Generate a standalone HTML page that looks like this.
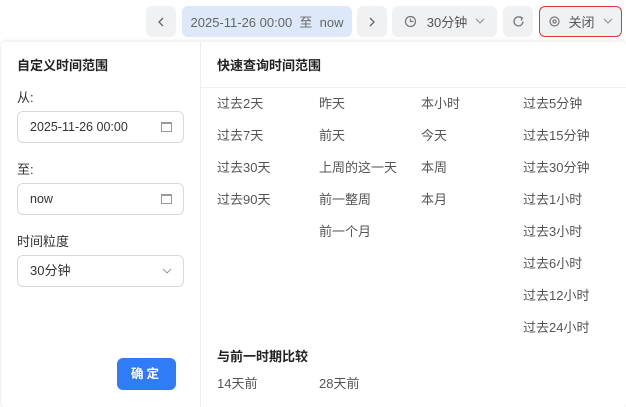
<!DOCTYPE html>
<html><head><meta charset="utf-8"><style>
*{box-sizing:border-box;margin:0;padding:0}
body{width:626px;height:407px;background:#fff;font-family:"Liberation Sans","Noto Sans CJK SC",sans-serif;position:relative;overflow:hidden;color:#333}
.b{position:absolute;top:6px;height:31px;border-radius:6px;background:#f0f1f3;display:flex;align-items:center;justify-content:center;font-size:13px;color:#555}
.panel{position:absolute;left:1px;top:42px;width:625px;height:365px;background:#fff;box-shadow:0 0 6px rgba(0,0,0,.12);border-radius:4px}
.a{position:absolute;font-size:13px;color:#555;white-space:nowrap}
.h{position:absolute;font-size:13px;font-weight:bold;color:#222}
.inp{position:absolute;left:16px;width:167px;height:32px;border:1px solid #d9d9d9;border-radius:6px;font-size:12.5px;color:#333;padding-left:12px;line-height:30px}
.cal{position:absolute;right:11px;top:10px;width:11px;height:10px;border:1px solid #999;border-top-width:2px}
svg{display:block}
</style></head><body>
<div class="b" style="left:146px;width:30px"><svg width="8" height="10"><path d="M6 1L2 5L6 9" fill="none" stroke="#666" stroke-width="1.3"/></svg></div>
<div class="b" style="left:182px;width:170px;background:#dde9f8;color:#666">2025-11-26 00:00&nbsp; 至&nbsp; now</div>
<div class="b" style="left:357px;width:30px"><svg width="8" height="10"><path d="M2 1L6 5L2 9" fill="none" stroke="#666" stroke-width="1.3"/></svg></div>
<div class="b" style="left:392px;width:105px"><svg width="13" height="13" style="margin-right:10px"><circle cx="6.5" cy="6.5" r="5" fill="none" stroke="#777" stroke-width="1.2"/><path d="M6.5 3.5V6.5H9.5" fill="none" stroke="#777" stroke-width="1.2"/></svg>30分钟<svg width="10" height="7" style="margin-left:8px"><path d="M1 1L5 5L9 1" fill="none" stroke="#888" stroke-width="1"/></svg></div>
<div class="b" style="left:503px;width:30px"><svg width="13" height="13"><path d="M11 6.5A4.5 4.5 0 1 1 9.5 3" fill="none" stroke="#777" stroke-width="1.3"/><path d="M7.5 1.5L10.5 3L9 5.5" fill="none" stroke="#777" stroke-width="1.2"/></svg></div>
<div class="b" style="left:539px;width:83px;background:#f0f1f3;border:1px solid #d9363e"><svg width="13" height="13" style="margin-right:7px"><path d="M2 6.5A4.5 4.5 0 0 1 11 6.5M11 6.5A4.5 4.5 0 0 1 2 6.5" fill="none" stroke="#777" stroke-width="1.2"/><circle cx="6.5" cy="6.5" r="1.6" fill="none" stroke="#777" stroke-width="1.2"/></svg>关闭<svg width="10" height="7" style="margin-left:8px"><path d="M1 1L5 5L9 1" fill="none" stroke="#888" stroke-width="1"/></svg></div>
<div class="panel">
<div style="position:absolute;left:199px;top:0;width:1px;height:365px;background:#eee"></div>
<div style="position:absolute;left:200px;top:45px;width:425px;height:1px;background:#eee"></div>
<div class="h" style="left:16px;top:13px">自定义时间范围</div>
<div class="a" style="left:16px;top:45px;color:#333">从:</div>
<div class="inp" style="top:69px">2025-11-26 00:00<span class="cal"></span></div>
<div class="a" style="left:16px;top:117px;color:#333">至:</div>
<div class="inp" style="top:141px">now<span class="cal"></span></div>
<div class="a" style="left:16px;top:189px;color:#333">时间粒度</div>
<div class="inp" style="top:213px;font-size:13px">30分钟<svg width="10" height="7" style="position:absolute;right:11px;top:12px"><path d="M1 1L5 5L9 1" fill="none" stroke="#999" stroke-width="1"/></svg></div>
<div style="position:absolute;left:116px;top:316px;width:59px;height:32px;background:#2f7cf6;border-radius:6px;color:#fff;font-size:12.5px;font-weight:bold;text-align:center;line-height:32px;letter-spacing:3px">确定</div>
<div class="h" style="left:216px;top:13px">快速查询时间范围</div>
<div class="a" style="left:216px;top:51px">过去2天</div><div class="a" style="left:318px;top:51px">昨天</div><div class="a" style="left:420px;top:51px">本小时</div><div class="a" style="left:522px;top:51px">过去5分钟</div>
<div class="a" style="left:216px;top:83px">过去7天</div><div class="a" style="left:318px;top:83px">前天</div><div class="a" style="left:420px;top:83px">今天</div><div class="a" style="left:522px;top:83px">过去15分钟</div>
<div class="a" style="left:216px;top:115px">过去30天</div><div class="a" style="left:318px;top:115px">上周的这一天</div><div class="a" style="left:420px;top:115px">本周</div><div class="a" style="left:522px;top:115px">过去30分钟</div>
<div class="a" style="left:216px;top:147px">过去90天</div><div class="a" style="left:318px;top:147px">前一整周</div><div class="a" style="left:420px;top:147px">本月</div><div class="a" style="left:522px;top:147px">过去1小时</div>
<div class="a" style="left:318px;top:179px">前一个月</div><div class="a" style="left:522px;top:179px">过去3小时</div>
<div class="a" style="left:522px;top:211px">过去6小时</div>
<div class="a" style="left:522px;top:243px">过去12小时</div>
<div class="a" style="left:522px;top:275px">过去24小时</div>
<div class="h" style="left:216px;top:304px">与前一时期比较</div>
<div class="a" style="left:216px;top:331px">14天前</div><div class="a" style="left:318px;top:331px">28天前</div>
</div>
</body></html>
